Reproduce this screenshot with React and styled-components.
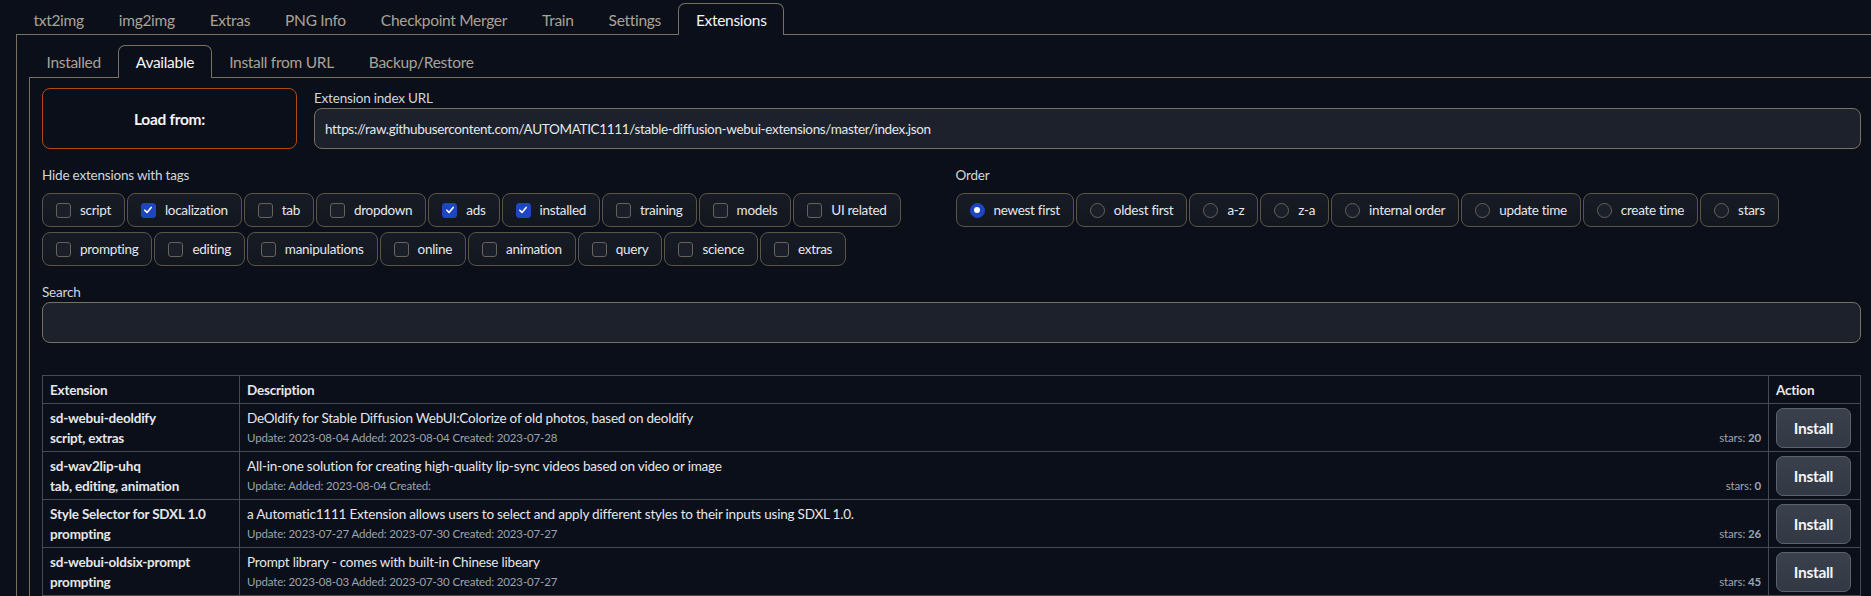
import React from "react";
import styled, { createGlobalStyle } from "styled-components";

const GlobalStyle = createGlobalStyle`
  html, body {
    margin: 0;
    padding: 0;
    background: #0b0f19;
    overflow: hidden;
  }
  body {
    font-family: Lato, "Noto Sans", sans-serif;
    color: #e5e7eb;
  }
  * { box-sizing: border-box; }
`;

const topTabs = ["txt2img", "img2img", "Extras", "PNG Info", "Checkpoint Merger", "Train", "Settings", "Extensions"];
const subTabs = ["Installed", "Available", "Install from URL", "Backup/Restore"];

const tagRows = [
  [
    ["script", false], ["localization", true], ["tab", false], ["dropdown", false], ["ads", true],
    ["installed", true], ["training", false], ["models", false], ["UI related", false],
  ],
  [
    ["prompting", false], ["editing", false], ["manipulations", false], ["online", false],
    ["animation", false], ["query", false], ["science", false], ["extras", false],
  ],
];

const orders = ["newest first", "oldest first", "a-z", "z-a", "internal order", "update time", "create time", "stars"];

const extensions = [
  {
    name: "sd-webui-deoldify",
    tags: "script, extras",
    desc: "DeOldify for Stable Diffusion WebUI:Colorize of old photos, based on deoldify",
    info: "Update: 2023-08-04 Added: 2023-08-04 Created: 2023-07-28",
    stars: 20,
  },
  {
    name: "sd-wav2lip-uhq",
    tags: "tab, editing, animation",
    desc: "All-in-one solution for creating high-quality lip-sync videos based on video or image",
    info: "Update: Added: 2023-08-04 Created:",
    stars: 0,
  },
  {
    name: "Style Selector for SDXL 1.0",
    tags: "prompting",
    desc: "a Automatic1111 Extension allows users to select and apply different styles to their inputs using SDXL 1.0.",
    info: "Update: 2023-07-27 Added: 2023-07-30 Created: 2023-07-27",
    stars: 26,
  },
  {
    name: "sd-webui-oldsix-prompt",
    tags: "prompting",
    desc: "Prompt library - comes with built-in Chinese libeary",
    info: "Update: 2023-08-03 Added: 2023-07-30 Created: 2023-07-27",
    stars: 45,
  },
];

const Root = styled.div`
  width: 1887px;
  padding-left: 16px;
  font-size: 13.5px;
  letter-spacing: -0.2px;
`;

const TabNav = styled.div`
  display: flex;
  height: ${(p) => p.$height}px;
  margin-top: ${(p) => p.$top}px;
`;

const TabButton = styled.div`
  position: relative;
  z-index: 1;
  display: flex;
  align-items: center;
  padding: 0 16.5px;
  font-size: 15.5px;
  letter-spacing: -0.3px;
  color: ${(p) => (p.$active ? "#f3f4f6" : "#a9a398")};
  background: ${(p) => (p.$active ? "#0b0f19" : "transparent")};
  border: 1px solid ${(p) => (p.$active ? "#7a705f" : "transparent")};
  border-bottom: none;
  border-radius: 7px 7px 0 0;
  height: calc(100% + 1px);
  white-space: nowrap;
`;

const Panel = styled.div`
  border: 1px solid #7a705f;
  padding: 10px 12px;
  width: ${(p) => p.$width}px;
  min-height: 700px;
`;

const LoadRow = styled.div`
  display: flex;
  gap: 17px;
  height: 61px;
`;

const LoadButton = styled.div`
  width: 255px;
  flex: none;
  display: flex;
  align-items: center;
  justify-content: center;
  border: 1px solid #b04a12;
  border-radius: 8px;
  font-size: 15.5px;
  letter-spacing: -0.3px;
  font-weight: 700;
  color: #f3f4f6;
`;

const Field = styled.div`
  flex: 1;
  display: flex;
  flex-direction: column;
`;

const Label = styled.div`
  line-height: 20px;
  color: #d1d5db;
  margin-bottom: ${(p) => p.$gap || 0}px;
`;

const TextBox = styled.div`
  height: 41px;
  display: flex;
  align-items: center;
  padding: 0 10px;
  background: #1c212b;
  border: 1px solid #7a705f;
  border-radius: 8px;
  color: #e5e7eb;
  letter-spacing: -0.33px;
`;

const OptionsGrid = styled.div`
  display: grid;
  grid-template-columns: 1fr 1fr;
  gap: 8px;
  margin-top: 16px;
`;

const ChipStack = styled.div`
  display: flex;
  flex-direction: column;
  gap: 5px;
`;

const ChipRow = styled.div`
  display: flex;
  gap: 2px;
`;

const Chip = styled.label`
  display: flex;
  align-items: center;
  gap: 9px;
  height: 34px;
  padding: 0 13px;
  background: linear-gradient(#161b25, #12171f);
  border: 1px solid #5b5548;
  border-radius: 8px;
  color: #e5e7eb;
  letter-spacing: -0.3px;
  white-space: nowrap;
`;

const Box = styled.span`
  width: 15px;
  height: 15px;
  flex: none;
  display: flex;
  align-items: center;
  justify-content: center;
  border-radius: ${(p) => (p.$round ? "50%" : "3px")};
  background: ${(p) => (p.$on ? "#1f46c1" : "#1a1f29")};
  border: 1px solid ${(p) => (p.$on ? "#1f46c1" : "#67625a")};
`;

const Dot = styled.span`
  width: 6px;
  height: 6px;
  border-radius: 50%;
  background: #ffffff;
`;

const SearchBlock = styled.div`
  margin-top: 16px;
`;

const Table = styled.table`
  margin-top: 32px;
  width: 100%;
  border-collapse: collapse;
  line-height: 20px;

  th, td {
    border: 1px solid #464a52;
    padding: 4px 7px 3px;
    text-align: left;
    vertical-align: top;
  }
  th {
    font-weight: 700;
    color: #e5e7eb;
  }
`;

const NameCell = styled.td`
  width: 197px;
  font-weight: 700;
  color: #e5e7eb;
  white-space: nowrap;
`;

const ActionCell = styled.td`
  width: 92px;
`;

const Desc = styled.div`
  color: #e5e7eb;
`;

const Info = styled.div`
  display: flex;
  justify-content: space-between;
  font-size: 11.5px;
  letter-spacing: -0.15px;
  color: #9ca3af;
`;

const InstallButton = styled.button`
  width: 75px;
  height: 40px;
  display: block;
  background: linear-gradient(#3a414d, #323844);
  border: 1px solid #5b626e;
  border-radius: 7px;
  font-family: inherit;
  font-size: 15.5px;
  letter-spacing: -0.3px;
  font-weight: 700;
  color: #f3f4f6;
`;

const Check = () => (
  <svg width="10" height="10" viewBox="0 0 10 10">
    <path d="M1.8 5.2 L4 7.4 L8.2 2.4" fill="none" stroke="#fff" strokeWidth="1.6" strokeLinecap="round" strokeLinejoin="round" />
  </svg>
);

export default function App() {
  return (
    <Root>
      <GlobalStyle />
      <TabNav $height={31} $top={3}>
        {topTabs.map((t) => (
          <TabButton key={t} $active={t === "Extensions"}>{t}</TabButton>
        ))}
      </TabNav>
      <Panel $width={1871}>
        <TabNav $height={32} $top={0}>
          {subTabs.map((t) => (
            <TabButton key={t} $active={t === "Available"}>{t}</TabButton>
          ))}
        </TabNav>
        <Panel $width={1845}>
          <LoadRow>
            <LoadButton>Load from:</LoadButton>
            <Field>
              <Label>Extension index URL</Label>
              <TextBox>https://raw.githubusercontent.com/AUTOMATIC1111/stable-diffusion-webui-extensions/master/index.json</TextBox>
            </Field>
          </LoadRow>

          <OptionsGrid>
            <div>
              <Label $gap={8}>Hide extensions with tags</Label>
              <ChipStack>
                {tagRows.map((row, i) => (
                  <ChipRow key={i}>
                    {row.map(([tag, on]) => (
                      <Chip key={tag}>
                        <Box $on={on}>{on && <Check />}</Box>
                        {tag}
                      </Chip>
                    ))}
                  </ChipRow>
                ))}
              </ChipStack>
            </div>
            <div>
              <Label $gap={8}>Order</Label>
              <ChipRow>
                {orders.map((o, i) => (
                  <Chip key={o}>
                    <Box $round $on={i === 0}>{i === 0 && <Dot />}</Box>
                    {o}
                  </Chip>
                ))}
              </ChipRow>
            </div>
          </OptionsGrid>

          <SearchBlock>
            <Label>Search</Label>
            <TextBox />
          </SearchBlock>

          <Table>
            <thead>
              <tr>
                <th>Extension</th>
                <th>Description</th>
                <th>Action</th>
              </tr>
            </thead>
            <tbody>
              {extensions.map((e) => (
                <tr key={e.name}>
                  <NameCell>
                    <div>{e.name}</div>
                    <div>{e.tags}</div>
                  </NameCell>
                  <td>
                    <Desc>{e.desc}</Desc>
                    <Info>
                      <span>{e.info}</span>
                      <span>stars: <b>{e.stars}</b></span>
                    </Info>
                  </td>
                  <ActionCell>
                    <InstallButton>Install</InstallButton>
                  </ActionCell>
                </tr>
              ))}
            </tbody>
          </Table>
        </Panel>
      </Panel>
    </Root>
  );
}
